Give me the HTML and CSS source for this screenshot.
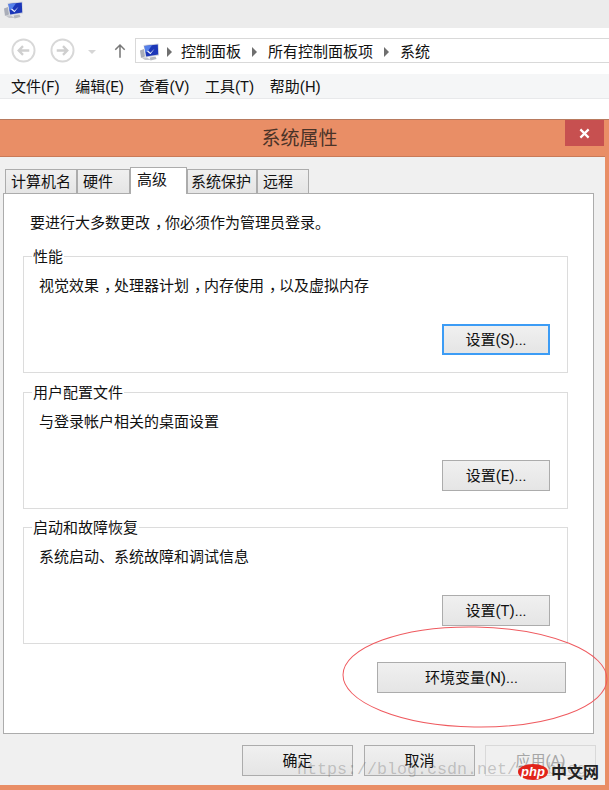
FILE: index.html
```html
<!DOCTYPE html>
<html lang="zh">
<head>
<meta charset="utf-8">
<title>系统属性</title>
<link rel="stylesheet" href="styles.css">
</head>
<body>
<svg class="defs" width="0" height="0" aria-hidden="true">
  <defs>
    <symbol id="pc" viewBox="0 0 20 18">
      <path d="M1 7.500l4-1.500 1 7.500-4 1.500z" fill="#a9adb8"/>
      <path d="M1.500 14l4.500 3h6l-4-2.500z" fill="#c4c6cc"/>
      <path d="M4.500 2L19.500.5l.5 12-13.500 2z" fill="#cfd3de"/>
      <path d="M5.500 3L18.800 1.600l.4 10-12 1.800z" fill="#1c37b8"/>
      <path d="M5.500 3L13 2.200 9 8 6.300 9.500z" fill="#5580ea"/>
      <path d="M9 7.500l2.500 2.200 4-4-4 5.500-3.500-2.800z" fill="#eef2fd"/>
      <path d="M10.500 14.500l6-1 1 2.500-6 1.500z" fill="#b4b7bd"/>
    </symbol>
  </defs>
</svg>
<div class="explorer">
  <div class="caption">
    <svg class="pc-icon"><use href="#pc"/></svg>
  </div>
  <div class="navbar">
    <svg class="nav-btn" viewBox="0 0 26 26"><circle cx="13" cy="13" r="11.500"/><path d="M19 13H8M12.500 8.500L8 13l4.500 4.500"/></svg>
    <svg class="nav-btn" viewBox="0 0 26 26"><circle cx="13" cy="13" r="11.500"/><path d="M7 13h11M13.500 8.500L18 13l-4.500 4.500"/></svg>
    <span class="nav-drop"></span>
    <svg class="nav-up" viewBox="0 0 14 18"><path d="M7 17V2M1.500 7.500L7 2l5.500 5.500"/></svg>
    <div class="address">
      <svg class="pc-icon"><use href="#pc"/></svg>
      <span class="crumb-sep crumb-first"></span><span>控制面板</span>
      <span class="crumb-sep"></span><span>所有控制面板项</span>
      <span class="crumb-sep"></span><span>系统</span>
    </div>
  </div>
  <div class="menubar">
    <span>文件(F)</span><span>编辑(E)</span><span>查看(V)</span><span>工具(T)</span><span>帮助(H)</span>
  </div>
  <div class="blank"></div>
</div>
<div class="dialog">
  <div class="titlebar">
    <span class="title">系统属性</span>
    <span class="close"><svg viewBox="0 0 12 12"><path d="M1.500 1.500l9 9M10.500 1.500l-9 9"/></svg></span>
  </div>
  <div class="body">
    <div class="tabs">
      <span class="tab tab-name">计算机名</span>
      <span class="tab tab-hw">硬件</span>
      <span class="tab tab-active">高级</span>
      <span class="tab tab-prot">系统保护</span>
      <span class="tab tab-remote">远程</span>
    </div>
    <div class="panel">
      <p class="notice">要进行大多数更改<span class="comma">，</span>你必须作为管理员登录。</p>
      <div class="group">
        <span class="legend">性能</span>
        <p class="desc">视觉效果<span class="comma">，</span>处理器计划<span class="comma">，</span>内存使用<span class="comma">，</span>以及虚拟内存</p>
        <span class="btn btn-set btn-focus">设置(S)...</span>
      </div>
      <div class="group group-tight">
        <span class="legend">用户配置文件</span>
        <p class="desc">与登录帐户相关的桌面设置</p>
        <span class="btn btn-set">设置(E)...</span>
      </div>
      <div class="group">
        <span class="legend">启动和故障恢复</span>
        <p class="desc">系统启动、系统故障和调试信息</p>
        <span class="btn btn-set">设置(T)...</span>
      </div>
      <span class="btn btn-env">环境变量(N)...</span>
    </div>
    <div class="actions">
      <span class="btn btn-act">确定</span>
      <span class="btn btn-act">取消</span>
      <span class="btn btn-act btn-off">应用(A)</span>
    </div>
  </div>
</div>
<svg class="ring" viewBox="0 0 267 104"><ellipse cx="133" cy="52" rx="132" ry="50" transform="rotate(1 133 52)"/></svg>
<span class="watermark">https://blog.csdn.net/qq_blog</span>
<div class="php-logo"><span class="php-badge">php</span><span class="php-cn">中文网</span></div>
</body>
</html>
```
FILE: styles.css
```css
* { box-sizing: border-box; }
html, body { margin: 0; padding: 0; }
body {
  position: relative;
  width: 609px;
  height: 790px;
  overflow: hidden;
  background: #fff;
  color: #111;
  font: 15px/20px Roboto, "Noto Sans CJK SC", sans-serif;
}
.defs { position: absolute; }
p { margin: 0; }

.caption { height: 28px; background: #ececec; padding: 1px 0 0 3px; }
.pc-icon { display: block; flex: none; width: 20px; height: 18px; }

.navbar { display: flex; align-items: center; height: 46px; padding: 10px 0 11px 11px; background: #fff; }
.nav-btn { width: 25px; height: 25px; margin-right: 14px; }
.nav-btn circle { fill: #fff; stroke: #d8d8d8; stroke-width: 2; }
.nav-btn path { fill: none; stroke: #cfcfcf; stroke-width: 2.400; }
.nav-drop { width: 0; height: 0; margin: 2px 18px 0 -1px; border: 4px solid transparent; border-top: 4px solid #d6d6d6; border-bottom: 0; }
.nav-up { width: 12px; height: 16px; margin-right: 9px; fill: none; stroke: #787878; stroke-width: 1.800; }
.address {
  display: flex; align-items: center; flex: 0 0 500px; height: 25px;
  margin-right: -50px; padding: 2px 0 0 3px;
  border: 1px solid #d9d9d9;
}
.crumb-sep { width: 0; height: 0; margin: 0 11px; border: 5px solid transparent; border-left: 5px solid #6f6f6f; border-right: 0; }
.crumb-first { margin: 0 9px 0 8px; }

.menubar { display: flex; gap: 15.500px; height: 25px; padding: 3px 0 0 11px; background: #f5f6f7; border-bottom: 1px solid #e8e9eb; }
.blank { height: 20px; background: #fff; }

.dialog { height: 671px; padding: 0 4px 5px 0; background: #e98e66; border-top: 1px solid #b87a5e; }
.titlebar { position: relative; display: flex; justify-content: center; height: 37px; border-bottom: 1px solid #c97a58; padding: 7px 6px 0 0; }
.title { font-size: 19px; line-height: 24px; color: #4a3328; }
.close { position: absolute; top: 0; right: 1px; display: flex; align-items: center; justify-content: center; width: 39px; height: 26px; background: #c75050; }
.close svg { width: 11px; height: 11px; fill: none; stroke: #fff; stroke-width: 2.400; }

.body { height: 628px; padding: 11px 11px 0 3px; background: #f0f0f0; }
.tabs { display: flex; align-items: flex-end; height: 26px; padding-left: 2px; position: relative; z-index: 1; }
.tab { height: 24px; margin-bottom: 1px; border: 1px solid #acacac; border-bottom: 0; background: linear-gradient(#f0f0f0, #e5e5e5); padding: 2px 0 0 5px; white-space: nowrap; }
.tab-name { width: 72px; }
.tab-hw { width: 53px; }
.tab-active { width: 57px; height: 27px; margin-bottom: 0; background: #fff; padding: 2px 0 0 6px; }
.tab-prot { width: 70px; padding-left: 3px; }
.tab-remote { width: 52px; }

.panel { display: flex; flex-direction: column; height: 541px; padding: 19px 25px 0 19px; margin-top: -1px; background: #fff; border: 1px solid #acacac; }
.notice { padding-left: 7px; margin-bottom: 23px; }
.comma { display: inline-block; width: 15px; text-indent: 5px; }
.group { position: relative; display: flex; flex-direction: column; flex: 0 0 117px; margin-bottom: 19px; padding: 19px 17px 17px 15px; border: 1px solid #dcdcdc; }
.group-tight { margin-bottom: 18px; }
.legend { position: absolute; top: -10px; left: 8px; padding: 0 1px; background: #fff; }
.desc { flex: 1; }

.btn { display: flex; align-items: center; justify-content: center; border: 1px solid #acacac; background: linear-gradient(#f0f0f0, #e5e5e5); white-space: nowrap; }
.btn-set { align-self: flex-end; width: 108px; height: 31px; }
.btn-focus { border: 2px solid #3c9cf5; }
.btn-env { align-self: flex-end; width: 189px; height: 31px; margin: -1px 2px 0 0; }
.actions { display: flex; gap: 11px; justify-content: flex-end; padding: 11px 0 0 0; margin-right: -2px; }
.btn-act { width: 111px; height: 31px; }
.btn-off { margin-left: -1px; background: #f0f0f0; border-color: #d9d9d9; color: #a6a6a6; }

.ring { position: absolute; left: 342px; top: 625px; width: 267px; height: 104px; fill: none; stroke: #ef5a5f; stroke-width: 1; }
.watermark { position: absolute; left: 297px; top: 760px; font: 16.670px/20px "Liberation Mono", monospace; color: rgba(90, 90, 90, .3); white-space: nowrap; }
.php-logo { position: absolute; left: 518px; top: 763px; display: flex; align-items: center; gap: 3px; }
.php-badge { width: 30px; height: 16px; border-radius: 50%; background: #e2231a; color: #fff; font: italic 700 13px/15px "Liberation Sans", sans-serif; text-align: center; }
.php-cn { font: 700 16px/17px "Noto Sans CJK SC", sans-serif; color: #222; }
```
